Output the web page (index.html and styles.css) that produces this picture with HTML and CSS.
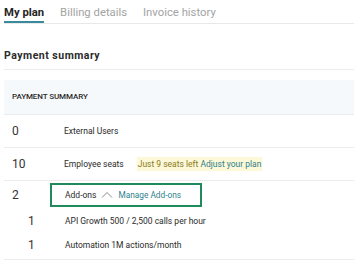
FILE: index.html
```html
<!DOCTYPE html>
<html>
  <head>
    <meta charset="utf-8" />
    <title>My plan</title>
    <link rel="stylesheet" href="styles.css">
  </head>
  <body>
    <nav class="tabs">
      <a class="tab active">My plan</a>
      <a class="tab">Billing details</a>
      <a class="tab">Invoice history</a>
    </nav>
    <h2 class="section-title">Payment summary</h2>
    <div class="summary">
      <div class="summary-head">PAYMENT SUMMARY</div>
      <div class="row">
        <span class="qty">0</span>
        <span class="label">External Users</span>
      </div>
      <div class="row">
        <span class="qty">10</span>
        <span class="label">Employee seats</span>
        <span class="seats-note">Just 9 seats left <a class="link">Adjust your plan</a></span>
      </div>
      <div class="row addons">
        <span class="qty">2</span>
        <div class="addons-box">
          <span class="label">Add-ons</span>
          <svg class="caret" width="12" height="7" viewBox="0 0 12 7"><path d="M1 6.5 L6 1.5 L11 6.5" fill="none" stroke="#8a8a8a" stroke-width="1"/></svg>
          <a class="link">Manage Add-ons</a>
        </div>
      </div>
      <div class="addon-list">
        <div class="sub-row">
          <span class="sub-qty">1</span>
          <span class="label">API Growth 500 / 2,500 calls per hour</span>
        </div>
        <div class="sub-row">
          <span class="sub-qty">1</span>
          <span class="label">Automation 1M actions/month</span>
        </div>
      </div>
    </div>
  </body>
</html>
```

FILE: styles.css
```css
body {
  margin: 0;
  padding: 0 4px;
  font-family: "Roboto", "Inter", sans-serif;
  color: #2b2b2b;
  background-color: white;
}
.tabs {
  display: flex;
  gap: 16px;
  height: 24px;
  border-bottom: 1px solid #e8e8e8;
  box-sizing: border-box;
}
.tab {
  font-size: 11.3px;
  color: #a3a3a3;
  padding-top: 6px;
  box-sizing: border-box;
}
.tab.active {
  color: #252525;
  font-weight: 700;
  border-bottom: 2px solid #3a8a9e;
}
.section-title {
  margin: 0;
  margin-top: 21px;
  height: 25px;
  font-size: 10.5px;
  font-weight: 700;
  letter-spacing: 0.5px;
  padding-top: 4px;
  box-sizing: border-box;
  border-bottom: 1px solid #ececec;
  color: #2b2b2b;
}
.summary {
  margin-top: 10px;
}
.summary-head {
  height: 34px;
  line-height: 34px;
  background-color: #f6f9fb;
  padding-left: 8px;
  font-size: 8px;
  font-weight: 500;
  letter-spacing: -0.1px;
  border-bottom: 1px solid #ececec;
}
.row {
  display: flex;
  align-items: center;
  height: 32px;
  border-bottom: 1px solid #ececec;
}
.qty {
  width: 52px;
  padding-left: 8px;
  font-size: 12px;
  color: #333;
}
.label {
  font-size: 8.5px;
  color: #2b2b2b;
}
.seats-note {
  margin-left: 13px;
  padding: 2px 1px;
  font-size: 8.5px;
  color: #8a7a1e;
  background-color: #fdf8d8;
}
.link {
  color: #2f7f8e;
}
.row.addons {
  border-bottom: none;
  height: 28px;
}
.addons-box {
  display: flex;
  align-items: center;
  gap: 5px;
  margin-left: -14px;
  width: 152px;
  height: 24px;
  padding-left: 13px;
  box-sizing: border-box;
  border: 2px solid #1f8a5c;
}
.addons-box .link {
  font-size: 8.3px;
}
.caret {
  margin-bottom: 2px;
}
.addon-list {
  border-bottom: 1px solid #ececec;
  padding-bottom: 2px;
}
.sub-row {
  display: flex;
  align-items: center;
  height: 24px;
}
.sub-qty {
  width: 37px;
  padding-left: 24px;
  font-size: 12px;
  color: #333;
}
```
